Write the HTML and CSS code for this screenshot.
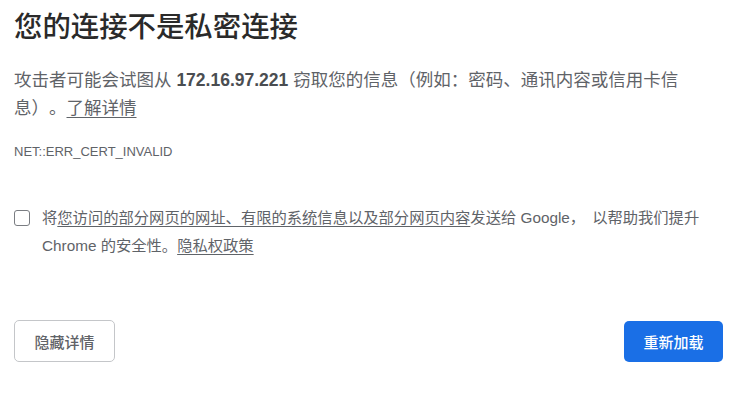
FILE: index.html
```html
<!DOCTYPE html>
<html lang="zh-CN">
<head>
<meta charset="utf-8">
<title>隐私设置错误</title>
<link rel="stylesheet" href="styles.css">
</head>
<body>
<div class="page">
  <h1 class="title">您的连接不是私密连接</h1>
  <p class="desc">攻击者可能会试图从 <strong>172.16.97.221</strong> 窃取您的信息（例如：密码、通讯内容或信用卡信息）。<a class="link" href="#">了解详情</a></p>
  <div class="code">NET::ERR_CERT_INVALID</div>
  <label class="optin">
    <span class="box"></span>
    <span class="optin-text">将<a class="link" href="#">您访问的部分网页的网址、有限的系统信息以及部分网页内容</a>发送给 Google<span class="wide">，</span>以帮助我们提升 Chrome 的安全性。<a class="link" href="#">隐私权政策</a></span>
  </label>
  <div class="actions">
    <button class="btn btn-secondary">隐藏详情</button>
    <button class="btn btn-primary">重新加载</button>
  </div>
</div>
</body>
</html>
```
FILE: styles.css
```css
html, body {
  margin: 0;
  padding: 0;
  background: #ffffff;
}
body {
  font-family: "Liberation Sans", "Noto Sans CJK SC", sans-serif;
  color: #5f6368;
  text-spacing-trim: space-all;
}
.page {
  width: 709px;
  padding: 9px 0 0 14px;
}
.title {
  margin: 0;
  font-size: 28.4px;
  line-height: 36px;
  font-weight: 500;
  color: #2a2a2a;
}
.desc {
  margin: 21px 0 0;
  font-size: 17.5px;
  line-height: 28px;
  color: #5f6368;
}
.desc strong {
  font-weight: 700;
  color: #4a4d51;
}
.link {
  color: #5f6368;
  text-decoration: underline;
  text-underline-offset: 3px;
}
.code {
  margin-top: 20px;
  font-size: 13px;
  line-height: 20px;
  color: #5f6368;
}
.optin {
  display: flex;
  align-items: flex-start;
  gap: 12px;
  margin-top: 42px;
  font-size: 15.3px;
  line-height: 28px;
}
.box {
  flex: none;
  width: 14px;
  height: 14px;
  margin-top: 6px;
  border: 1.5px solid #7a7d82;
  border-radius: 3px;
}
.optin-text {
  color: #5f6368;
}
.wide {
  margin-right: 7px;
}
.actions {
  display: flex;
  justify-content: space-between;
  align-items: center;
  margin-top: 60px;
}
.btn {
  font-family: "Liberation Sans", "Noto Sans CJK SC", sans-serif;
  font-size: 15px;
  font-weight: 500;
  height: 42px;
  border-radius: 5px;
  cursor: pointer;
}
.btn-secondary {
  width: 101px;
  background: #ffffff;
  color: #5f6368;
  border: 1px solid #c4c6c9;
}
.btn-primary {
  width: 99px;
  height: 41px;
  background: #1a6fe6;
  color: #ffffff;
  border: none;
}
```
